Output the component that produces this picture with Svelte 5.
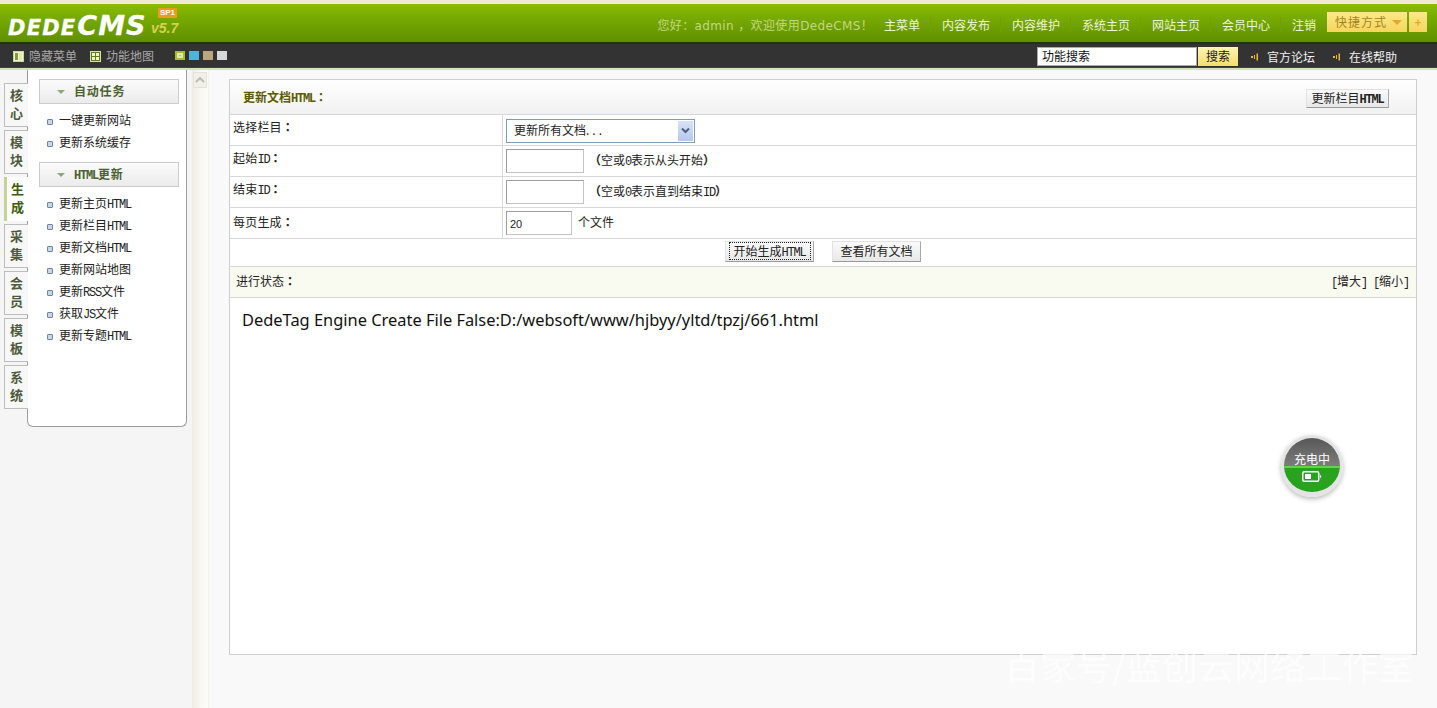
<script>
  const nav = ['主菜单', '内容发布', '内容维护', '系统主页', '网站主页', '会员中心', '注销'];
  const tabs = [['核', '心'], ['模', '块'], ['生', '成'], ['采', '集'], ['会', '员'], ['模', '板'], ['系', '统']];
  const groupA = [['一键更新网站', '', ''], ['更新系统缓存', '', '']];
  const groupB = [['更新主页', 'HTML', ''], ['更新栏目', 'HTML', ''], ['更新文档', 'HTML', ''], ['更新网站地图', '', ''], ['更新', 'RSS', '文件'], ['获取', 'JS', '文件'], ['更新专题', 'HTML', '']];
  const swatches = ['lime', 'blue', 'tan', 'grey'];
</script>

{#snippet item(g)}
  <li><i class="dot"></i><span>{g[0]}<span class="lat">{g[1]}</span>{g[2]}</span></li>
{/snippet}

<div class="page">
  <header class="top">
    <div class="stripe"></div>
    <div class="brand-bar">
      <div class="logo">
        <span class="dede">DEDE</span><span class="cms">CMS</span>
        <span class="ver">v5.7</span>
        <span class="sp">SP1</span>
      </div>
      <div class="nav">
        <span class="hello">您好：admin ，欢迎使用DedeCMS！</span>
        <ul class="links">
          {#each nav as link}<li>{link}</li>{/each}
        </ul>
        <div class="quick">
          <span class="quick-main">快捷方式<i class="caret"></i></span>
          <span class="quick-plus">+</span>
        </div>
      </div>
    </div>
    <div class="tool-bar">
      <div class="tool-left">
        <span class="tool">
          <svg width="11" height="11" viewBox="0 0 11 11"><rect x=".5" y=".5" width="10" height="10" fill="#f3f3c8" stroke="#c9d6a0"/><rect x="2" y="2" width="3" height="7" fill="#7f9a3a"/><rect x="6" y="2" width="3" height="7" fill="#dfe7b8"/></svg>
          隐藏菜单
        </span>
        <span class="tool">
          <svg width="11" height="11" viewBox="0 0 11 11"><rect x=".5" y=".5" width="10" height="10" fill="#5d7d20" stroke="#d8e59a"/><rect x="2" y="2" width="3" height="3" fill="#f0f3c4"/><rect x="6" y="2" width="3" height="3" fill="#f0f3c4"/><rect x="2" y="6" width="3" height="3" fill="#f0f3c4"/><rect x="6" y="6" width="3" height="3" fill="#f0f3c4"/></svg>
          功能地图
        </span>
        <span class="swatches">
          {#each swatches as s}<i class="sw {s}"></i>{/each}
        </span>
      </div>
      <div class="tool-right">
        <input class="search" value="功能搜索" />
        <button class="search-btn">搜索</button>
        <span class="help first"><svg width="8" height="8" viewBox="0 0 8 8"><path d="M0 3h2v2H0zM3 2h1v4H3zM5.500 .5h1.500v7H5.500z" fill="#e9b53a"/></svg>官方论坛</span>
        <span class="help"><svg width="8" height="8" viewBox="0 0 8 8"><path d="M0 3h2v2H0zM3 2h1v4H3zM5.500 .5h1.500v7H5.500z" fill="#e9b53a"/></svg>在线帮助</span>
      </div>
    </div>
    <div class="glow"></div>
  </header>

  <div class="body">
    <nav class="tabs">
      {#each tabs as t, i}
        <div class="tab" class:on={i === 2}><span>{t[0]}</span><span>{t[1]}</span></div>
      {/each}
    </nav>

    <aside class="panel">
      <h3 class="group"><i class="down"></i><span>自动任务</span></h3>
      <ul class="items">
        {#each groupA as g}{@render item(g)}{/each}
      </ul>
      <h3 class="group second"><i class="down"></i><span><span class="lat">HTML</span>更新</span></h3>
      <ul class="items">
        {#each groupB as g}{@render item(g)}{/each}
      </ul>
    </aside>

    <div class="strip">
      <div class="up">
        <svg width="10" height="6" viewBox="0 0 10 6"><path d="M1 5l4-4 4 4" fill="none" stroke="#bdbdb2" stroke-width="2"/></svg>
      </div>
    </div>

    <main class="main">
      <section class="card">
        <div class="head">
          <strong>更新文档<span class="lat">HTML</span><span class="p">：</span></strong>
          <button class="btn small">更新栏目<span class="lat">HTML</span></button>
        </div>
        <div class="row">
          <div class="label">选择栏目<span class="p">：</span></div>
          <div class="cell">
            <div class="select">
              <span class="sel-text">更新所有文档<span class="dots">...</span></span>
              <i class="sel-arrow"><svg width="9" height="7" viewBox="0 0 9 7"><path d="M1 1.500l3.500 3.500L8 1.500" fill="none" stroke="#4d6185" stroke-width="2"/></svg></i>
            </div>
          </div>
        </div>
        <div class="row">
          <div class="label">起始<span class="lat">ID</span><span class="p">：</span></div>
          <div class="cell"><input class="num" /><span class="hint"><span class="p">（</span>空或<span class="lat">0</span>表示从头开始<span class="p">）</span></span></div>
        </div>
        <div class="row">
          <div class="label">结束<span class="lat">ID</span><span class="p">：</span></div>
          <div class="cell"><input class="num" /><span class="hint"><span class="p">（</span>空或<span class="lat">0</span>表示直到结束<span class="lat">ID</span><span class="p">）</span></span></div>
        </div>
        <div class="row r-last">
          <div class="label">每页生成<span class="p">：</span></div>
          <div class="cell"><input class="num short" value="20" /><span class="files">个文件</span></div>
        </div>
        <div class="actions">
          <button class="btn wide"><span class="focus">开始生成<span class="lat">HTML</span></span></button>
          <button class="btn wide">查看所有文档</button>
        </div>
        <div class="status"><span>进行状态<span class="p">：</span></span><span><span class="lat">[</span>增大<span class="lat">] [</span>缩小<span class="lat">]</span></span></div>
        <div class="output">DedeTag Engine Create File False:D:/websoft/www/hjbyy/yltd/tpzj/661.html</div>
      </section>
    </main>
  </div>

  <div class="charge">
    <div class="charge-top">充电中</div>
    <div class="charge-bottom">
      <svg width="20" height="11" viewBox="0 0 20 11"><rect x=".75" y=".75" width="16" height="9.500" rx="1.500" fill="none" stroke="#fff" stroke-width="1.500"/><rect x="3" y="3" width="6" height="5" fill="#fff"/><path d="M18 3.500l1.500 2-1.500 2z" fill="#fff"/></svg>
    </div>
  </div>
  <div class="mark">百家号/蓝创云网络工作室</div>
</div>

<style>
  :global(body) { margin: 0; background: #f5f5f5; }
  .page {
    position: relative;
    width: 1437px;
    height: 708px;
    overflow: hidden;
    font: 12px/16px "Noto Sans CJK SC", "Liberation Sans", sans-serif;
    color: #222;
    background: #f5f5f5;
  }
  ul { margin: 0; padding: 0; list-style: none; }
  i { display: block; }
  .lat {
    font-family: "Liberation Mono", "Noto Sans CJK SC", monospace;
    font-size: 12px;
    line-height: 1;
    letter-spacing: -1.2px;
  }
  .p { font-family: "Noto Sans CJK TC", "Noto Sans CJK SC", sans-serif; font-weight: 700; line-height: 1; }

  .stripe { height: 4px; background: #efe9d6; }
  .brand-bar {
    height: 38px;
    display: flex;
    justify-content: space-between;
    background: linear-gradient(#8cbc06, #7aad02 30%, #5f9000);
  }
  .logo {
    position: relative;
    padding: 9px 0 0 8px;
    width: 200px;
    box-sizing: border-box;
    color: #fff;
    font: italic 700 21px/26px "DejaVu Sans", sans-serif;
    letter-spacing: 1.200px;
    white-space: nowrap;
    -webkit-text-stroke: .3px #fff;
  }
  .cms { font-size: 27px; letter-spacing: 1px; margin-left: 1px; }
  .ver {
    position: absolute;
    left: 151px;
    top: 15px;
    font: italic 700 14px/18px "Liberation Sans", sans-serif;
    letter-spacing: 0;
    color: #d9cf4e;
    -webkit-text-stroke: 0;
  }
  .sp {
    position: absolute;
    left: 158px;
    top: 4px;
    width: 19px;
    height: 10px;
    background: #ef9a1c;
    color: #fff;
    font: 700 8px/10px "Liberation Sans", sans-serif;
    letter-spacing: 0;
    text-align: center;
    -webkit-text-stroke: 0;
  }
  .nav { display: flex; align-items: center; padding: 0 10px 0 0; height: 38px; }
  .hello {
    width: 217px;
    color: #c3d77e;
    font-family: "DejaVu Sans", "Noto Sans CJK SC", sans-serif;
    font-size: 12px;
    margin-top: 5px;
    white-space: nowrap;
    letter-spacing: .38px;
  }
  .links { display: flex; margin-top: 4px; margin-left: -1px; }
  .links li {
    padding: 0 10.500px;
    color: #eef3d8;
    border-right: 1px solid #6f9f0a;
    white-space: nowrap;
  }
  .links li:last-child { border-right: 0; padding-right: 11px; }
  .quick { display: flex; gap: 2px; margin-top: -2px; height: 20px; }
  .quick-main, .quick-plus {
    background: linear-gradient(#fbe988, #f6d55e);
    color: #a5841f;
    line-height: 20px;
  }
  .quick-main {
    width: 80px;
    display: flex;
    align-items: center;
    padding-left: 8px;
    box-sizing: border-box;
    gap: 5px;
    letter-spacing: 1px;
  }
  .caret { width: 0; height: 0; border: 5px solid transparent; border-top: 5px solid #e2a92c; border-bottom: 0; }
  .quick-plus { width: 18px; text-align: center; font-weight: 700; color: #e8a92a; }

  .tool-bar {
    height: 26px;
    box-sizing: border-box;
    border-top: 2px solid #25330c;
    border-bottom: 1px solid #3d4c1c;
    display: flex;
    justify-content: space-between;
    background: #333;
  }
  .tool-left { display: flex; align-items: center; padding-left: 13px; }
  .tool { display: flex; align-items: center; gap: 5px; color: #a8a8a8; margin-right: 13px; margin-top: 1px; }
  .swatches { display: flex; gap: 4px; margin-left: 8px; }
  .sw { width: 10px; height: 9px; }
  .lime { background: #b6cf4a; box-shadow: inset 0 0 0 2px #a3bf2c, inset 0 0 0 4px #e2eba4; }
  .blue { background: #4fb3df; }
  .tan { background: #b9a57e; }
  .grey { background: #d7d8d8; }
  .tool-right { display: flex; align-items: center; padding-right: 40px; margin-top: 1px; }
  .search {
    width: 160px;
    height: 19px;
    padding: 0 0 2px 4px;
    box-sizing: border-box;
    border: 1px solid #aaa;
    font: inherit;
    color: #111;
    background: #fff;
    outline: 0;
  }
  .search-btn {
    width: 40px;
    height: 19px;
    margin-left: 1px;
    padding: 0;
    border: 0;
    background: linear-gradient(#fdf4b4, #f6dd6c);
    font: inherit;
    color: #222;
  }
  .help { display: flex; align-items: center; gap: 8px; color: #f0f0f0; margin-left: 18px; margin-top: 1px; }
  .help.first { margin-left: 13px; }

  .glow { height: 2px; background: #d5e4b6; }

  .body { display: flex; height: 638px; }
  .tabs { width: 27px; padding: 13px 0 0 4px; box-sizing: border-box; display: flex; flex-direction: column; gap: 3px; }
  .tab {
    width: 24px;
    height: 44px;
    box-sizing: border-box;
    border: 1px solid #bdbdbd;
    border-right: 0;
    background: #f7f7f7;
    display: flex;
    flex-direction: column;
    align-items: center;
    padding-top: 2px;
    color: #4e5a3c;
    font-weight: 700;
    font-size: 13px;
    line-height: 18px;
    position: relative;
    z-index: 1;
  }
  .tab.on {
    border: 0;
    border-left: 3px solid #c3d596;
    background: #fff;
    color: #3f5c10;
    padding-top: 3px;
  }
  .panel {
    width: 160px;
    height: 357px;
    box-sizing: border-box;
    background: #fff;
    border: 1px solid #9c9c9c;
    border-top: 0;
    border-radius: 0 0 6px 6px;
    padding: 9px 7px 0 11px;
  }
  .group {
    margin: 0;
    height: 25px;
    box-sizing: border-box;
    border: 1px solid #ccc;
    background: linear-gradient(#fbfbfb, #ebebeb);
    display: flex;
    align-items: center;
    padding: 0 0 2px 17px;
    font-size: 12px;
    font-weight: 700;
    color: #4b6130;
    line-height: 16px;
    letter-spacing: .8px;
  }
  .group .lat { font-weight: 700; letter-spacing: -1.200px; }
  .down {
    width: 0; height: 0;
    border: 4px solid transparent;
    border-top: 4px solid #8fa676;
    border-bottom: 0;
    margin: 2px 9px 0 0;
  }
  .second { margin-top: 8px; }
  .items { padding-top: 6px; }
  .items li { height: 22px; box-sizing: border-box; padding: 0 0 2px 7px; display: flex; align-items: center; color: #222; white-space: nowrap; }
  .dot {
    width: 4px;
    height: 4px;
    margin: 3px 6px 0 1px;
    border: 1px solid #6f86a8;
    border-radius: 1px;
    background: #c9d6e8;
    flex: none;
  }

  .strip {
    width: 16px;
    margin-left: 5px;
    background: linear-gradient(90deg, #efece3, #faf9f4 60%, #fbfbf8);
    border-right: 1px solid #f3f3ee;
    padding-top: 2px;
  }
  .up {
    width: 14px;
    height: 16px;
    margin: 0 auto;
    background: #f1f0e8;
    border: 1px solid #e4e3da;
    box-sizing: border-box;
    display: flex;
    align-items: center;
    justify-content: center;
  }
  .main { flex: 1; padding: 9px 20px 0; min-width: 0; background: #f9f9fa; }
  .card {
    width: 1188px;
    height: 576px;
    box-sizing: border-box;
    border: 1px solid #cfcfcf;
    background: #fff;
    display: flex;
    flex-direction: column;
  }
  .head {
    height: 35px;
    flex: none;
    box-sizing: border-box;
    border-bottom: 1px solid #d8d8d8;
    background: linear-gradient(#fff, #f1f1f1);
    display: flex;
    align-items: center;
    justify-content: space-between;
    padding: 0 27px 0 13px;
    color: #5c5a00;
  }
  .head strong { font-weight: 700; margin-top: -1px; }
  .head .lat { font-weight: 700; }
  .btn {
    border: 1px solid #e2e2e2;
    border-right-color: #a8a8a8;
    border-bottom-color: #999;
    background: linear-gradient(#fafafa, #e8e8e8);
    font: inherit;
    color: #222;
    padding: 0;
  }
  .btn.small { width: 83px; height: 19px; margin-top: 2px; padding-bottom: 2px; }
  .row {
    height: 31px;
    flex: none;
    box-sizing: border-box;
    border-bottom: 1px solid #d8d8d8;
    display: flex;
  }
  .label {
    width: 273px;
    flex: none;
    box-sizing: border-box;
    border-right: 1px solid #d8d8d8;
    padding: 4px 0 0 3px;
    letter-spacing: .2px;
  }
  .r-last .label { padding-top: 6px; }
  .cell { display: flex; align-items: center; padding-left: 3px; }
  .select {
    width: 189px;
    height: 24px;
    box-sizing: border-box;
    border: 1px solid #7f9db9;
    background: #fff;
    display: flex;
    align-items: center;
    justify-content: space-between;
    padding: 0 1px 0 7px;
    margin-top: 1px;
  }
  .sel-text { margin-top: -2px; }
  .dots { letter-spacing: 3px; }
  .sel-arrow {
    width: 15px;
    height: 20px;
    background: linear-gradient(#d6e2f6, #b5c9ec);
    display: flex;
    align-items: center;
    justify-content: center;
  }
  .num {
    width: 78px;
    height: 24px;
    box-sizing: border-box;
    border: 1px solid #c4c4c4;
    border-top-color: #9e9e9e;
    border-left-color: #9e9e9e;
    padding: 2px 3px 0;
    font: 11px "Liberation Sans", sans-serif;
    color: #222;
    outline: 0;
    background: #fff;
  }
  .num.short { width: 66px; }
  .hint { margin: -2px 0 0 5px; white-space: nowrap; }
  .files { margin-left: 6px; margin-top: -2px; }
  .actions {
    height: 28px;
    flex: none;
    box-sizing: border-box;
    border-bottom: 1px solid #d8d8d8;
    display: flex;
    align-items: center;
    justify-content: center;
    gap: 18px;
    padding-bottom: 2px;
  }
  .btn.wide { width: 89px; height: 21px; padding-bottom: 1px; }
  .focus { display: inline-block; outline: 1px dotted #222; line-height: 15px; width: 80px; }
  .status {
    height: 31px;
    flex: none;
    box-sizing: border-box;
    border-bottom: 1px solid #d8d8d8;
    background: #fafbf0;
    display: flex;
    align-items: center;
    justify-content: space-between;
    padding: 0 7px 2px 6px;
  }
  .output {
    padding: 10px 0 0 12px;
    font: 16.420px/24px "Noto Sans", sans-serif;
    color: #111;
  }

  .charge {
    position: absolute;
    left: 1281px;
    top: 435px;
    width: 62px;
    height: 62px;
    border-radius: 50%;
    overflow: hidden;
    box-sizing: border-box;
    border: 3px solid #e4e4e4;
    border-bottom-width: 5px;
    box-shadow: 0 2px 5px rgba(0,0,0,.28);
    display: flex;
    flex-direction: column;
  }
  .charge-top {
    height: 28px;
    flex: none;
    background: linear-gradient(#585858, #7c7c7c);
    color: #fff;
    font-size: 12px;
    line-height: 14px;
    padding-top: 14px;
    box-sizing: border-box;
    text-align: center;
  }
  .charge-bottom {
    flex: 1;
    background: #27a31e;
    border-top: 2px solid #58d93e;
    display: flex;
    justify-content: center;
    padding-top: 3px;
  }
  .charge-bottom svg { display: block; }
  .mark {
    position: absolute;
    left: 1004px;
    top: 642px;
    color: rgba(255,255,255,.7);
    font-size: 36px;
    line-height: 44px;
    white-space: nowrap;
    pointer-events: none;
  }
</style>
